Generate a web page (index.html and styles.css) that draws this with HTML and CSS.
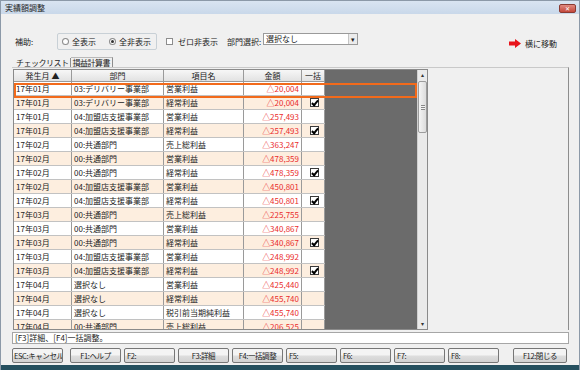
FILE: index.html
```html
<!DOCTYPE html>
<html lang="ja">
<head>
    <meta charset="UTF-8">
    <title>実績額調整</title>
    <link rel="stylesheet" href="styles.css">
</head>
<body>
    <div class="window">
        <div class="titlebar">
            <span class="title">実績額調整</span>
            <span class="close">✕</span>
        </div>

        <div class="client">
            <!-- 上部の条件 -->
            <div class="toolbar">
                <span class="lbl lbl-hojo">補助:</span>
                <div class="groupbox">
                    <span class="radio"></span><span class="radio-text">全表示</span>
                    <span class="radio checked"></span><span class="radio-text">全非表示</span>
                </div>
                <div class="check-wrap">
                    <span class="chk"></span><span>ゼロ非表示</span>
                </div>
                <span class="lbl lbl-bumon">部門選択:</span>
                <div class="select">
                    <span class="select-text">選択なし</span>
                    <span class="select-btn">▾</span>
                </div>
                <div class="spacer"></div>
                <div class="move">
                    <svg width="12" height="9" viewBox="0 0 12 9"><path d="M0 2.5h6V0l6 4.5L6 9V6.5H0z" fill="#e8141b"/></svg>
                    <span>横に移動</span>
                </div>
            </div>

            <!-- タブ -->
            <div class="tabs">
                <span class="tab active">チェックリスト</span>
                <span class="tab">損益計算書</span>
            </div>

            <div class="panel">
                <div class="grid">
                    <div class="grid-main">
                        <div class="row head">
                            <span>発生月 ▲</span>
                            <span>部門</span>
                            <span>項目名</span>
                            <span>金額</span>
                            <span>一括</span>
                        </div>
                        <div class="rows" id="rows"></div>
                        <div class="current"></div>
                    </div>
                    <div class="scrollbar">
                        <span class="sb-btn">▴</span>
                        <div class="sb-track">
                            <div class="sb-thumb"><span class="grip"></span></div>
                        </div>
                        <span class="sb-btn">▾</span>
                    </div>
                </div>
            </div>

            <div class="status">[F3]詳細、[F4]一括調整。</div>

            <div class="buttons">
                <button class="btn btn-esc">ESC:キャンセル</button>
                <div class="fkeys">
                    <button class="btn">F1:ヘルプ</button>
                    <button class="btn left">F2:</button>
                    <button class="btn">F3:詳細</button>
                    <button class="btn">F4:一括調整</button>
                    <button class="btn left">F5:</button>
                    <button class="btn left">F6:</button>
                    <button class="btn left">F7:</button>
                    <button class="btn left">F8:</button>
                </div>
                <button class="btn btn-close">F12:閉じる</button>
            </div>
        </div>
        <div class="frame-bottom"></div>
    </div>

    <script>
        // 実績データ
        const data = [
            ['17年01月', '03:デリバリー事業部', '営業利益', '△20,004', false],
            ['17年01月', '03:デリバリー事業部', '経常利益', '△20,004', true],
            ['17年01月', '04:加盟店支援事業部', '営業利益', '△257,493', false],
            ['17年01月', '04:加盟店支援事業部', '経常利益', '△257,493', true],
            ['17年02月', '00:共通部門', '売上総利益', '△363,247', false],
            ['17年02月', '00:共通部門', '営業利益', '△478,359', false],
            ['17年02月', '00:共通部門', '経常利益', '△478,359', true],
            ['17年02月', '04:加盟店支援事業部', '営業利益', '△450,801', false],
            ['17年02月', '04:加盟店支援事業部', '経常利益', '△450,801', true],
            ['17年03月', '00:共通部門', '売上総利益', '△225,755', false],
            ['17年03月', '00:共通部門', '営業利益', '△340,867', false],
            ['17年03月', '00:共通部門', '経常利益', '△340,867', true],
            ['17年03月', '04:加盟店支援事業部', '営業利益', '△248,992', false],
            ['17年03月', '04:加盟店支援事業部', '経常利益', '△248,992', true],
            ['17年04月', '選択なし', '営業利益', '△425,440', false],
            ['17年04月', '選択なし', '経常利益', '△455,740', false],
            ['17年04月', '選択なし', '税引前当期純利益', '△455,740', false],
            ['17年04月', '00:共通部門', '売上総利益', '△206,525', false]
        ];

        let html = '';
        data.forEach((r, i) => {
            html += `<div class="row ${i % 2 ? 'alt' : ''}">`;
            html += `<span>${r[0]}</span><span>${r[1]}</span><span>${r[2]}</span>`;
            html += `<span class="amt">${r[3]}</span>`;
            html += `<span class="ck">${r[4] ? '<i class="tick"></i>' : ''}</span>`;
            html += `</div>`;
        });
        document.getElementById('rows').innerHTML = html;
    </script>
</body>
</html>
```

FILE: styles.css
```css
* {
    box-sizing: border-box;
}

body {
    margin: 0;
    font-family: "Noto Sans CJK JP", "Noto Sans", sans-serif;
    font-size: 8px;
    color: #222;
}

.window {
    width: 580px;
    height: 370px;
    background-color: #f0f0f0;
    border-left: 1px solid #8c99a8;
    border-right: 1px solid #8c99a8;
    border-top: 1px solid #8c99a8;
    display: flex;
    flex-direction: column;
    overflow: hidden;
}

.titlebar {
    height: 13px;
    flex: none;
    display: flex;
    align-items: center;
    justify-content: space-between;
    padding: 0 3px 0 4px;
    background: linear-gradient(#d9e4f1, #c9d8ea);
}

.title {
    font-size: 8px;
    line-height: 10px;
    color: #1e1e1e;
}

.close {
    width: 17px;
    height: 9px;
    margin-top: 2px;
    border-radius: 2px;
    background: linear-gradient(#e08a80, #c4473b);
    border: 1px solid #8a3a32;
    color: #fff;
    font-size: 6px;
    line-height: 7px;
    text-align: center;
}

.client {
    flex: 1;
    margin: 1px 2px 0;
    padding: 0 8px 0 9px;
    display: flex;
    flex-direction: column;
    background-color: #f0f0f0;
}

.frame-bottom {
    height: 5px;
    flex: none;
    background-color: #25505f;
}

/* 上部の条件 */
.toolbar {
    margin-top: 18px;
    height: 17px;
    display: flex;
    align-items: center;
}

.lbl {
    line-height: 10px;
}

.lbl-hojo {
    width: 45px;
    padding-left: 3px;
}

.groupbox {
    width: 100px;
    height: 17px;
    border: 1px solid #c8d0d6;
    border-radius: 2px;
    display: flex;
    align-items: center;
    padding-left: 4px;
}

.radio {
    width: 7px;
    height: 7px;
    border-radius: 50%;
    border: 1px solid #8d8d8d;
    background-color: #fff;
    position: relative;
    margin-right: 3px;
}

.radio.checked::after {
    content: "";
    position: absolute;
    left: 1px;
    top: 1px;
    width: 3px;
    height: 3px;
    border-radius: 50%;
    background-color: #333;
}

.radio-text {
    width: 38px;
}

.check-wrap {
    width: 61px;
    margin-left: 9px;
    display: flex;
    align-items: center;
    white-space: nowrap;
}

.chk {
    width: 7px;
    height: 7px;
    border: 1px solid #8d8d8d;
    background-color: #fff;
    margin-right: 5px;
}

.lbl-bumon {
    width: 36px;
}

.select {
    width: 95px;
    height: 12px;
    margin-top: -6px;
    border: 1px solid #9a9a9a;
    background-color: #fff;
    display: flex;
    align-items: center;
    padding-left: 2px;
}

.select-text {
    flex: 1;
    line-height: 10px;
}

.select-btn {
    width: 9px;
    height: 10px;
    background-color: #ececec;
    border-left: 1px solid #c5c5c5;
    font-size: 7px;
    line-height: 10px;
    text-align: center;
}

.spacer {
    flex: 1;
}

.move {
    display: flex;
    align-items: center;
    gap: 4px;
    margin-right: 12px;
    margin-top: 3px;
}

/* タブ */
.tabs {
    margin-top: 7px;
    height: 10px;
    display: flex;
    align-items: flex-end;
    padding-left: 1px;
}

.tab {
    line-height: 9px;
    padding: 0 2px;
    white-space: nowrap;
    letter-spacing: -0.5px;
}

.tab.active {
    padding-left: 3px;
    padding-right: 1px;
    border-right: 1px solid #8d8d8d;
}

.tab:not(.active) {
    border-top: 1px solid #b9b9b9;
    border-right: 1px solid #8d8d8d;
    padding-right: 2px;
}

.panel {
    height: 263px;
    border-top: 1px solid #c9c9c9;
    border-right: 1px solid #8d8d8d;
    padding: 1px 0 0 1px;
}

/* グリッド */
.grid {
    width: 415px;
    height: 261px;
    border: 1px solid #8a8a8a;
    display: flex;
    overflow: hidden;
}

.grid-main {
    flex: 1;
    background-color: #6b6b6b;
    position: relative;
    overflow: hidden;
}

.row {
    width: 311px;
    height: 14px;
    display: grid;
    grid-template-columns: 58px 92px 80px 58px 23px;
    background-color: #fff;
    border-bottom: 1px solid #c2c2c2;
}

.row.alt {
    background-color: #fdeedf;
}

.row span {
    border-right: 1px solid #9a9a9a;
    padding: 0 2px;
    line-height: 13px;
    white-space: nowrap;
    overflow: hidden;
}

.row.head {
    height: 12px;
    background: linear-gradient(#f7f7f7, #e2e2e2);
    border-bottom: 1px solid #9a9a9a;
}

.row.head span {
    text-align: center;
    line-height: 11px;
}

.amt {
    text-align: right;
    color: #ea2c2c;
}

.ck {
    display: flex;
    align-items: center;
    justify-content: center;
}

.tick {
    width: 9px;
    height: 9px;
    border: 1px solid #3a3a3a;
    background-color: #fff;
    position: relative;
    margin-left: 2px;
}

.tick::after {
    content: "";
    position: absolute;
    left: 2px;
    top: 0;
    width: 2px;
    height: 5px;
    border-right: 2px solid #000;
    border-bottom: 2px solid #000;
    transform: rotate(40deg);
}

.current {
    position: absolute;
    left: 0;
    right: 0;
    top: 13px;
    height: 15px;
    border: 2px solid #f26a1b;
}

/* スクロールバー */
.scrollbar {
    width: 10px;
    background-color: #eaeaea;
    border-left: 1px solid #d0d0d0;
    display: flex;
    flex-direction: column;
}

.sb-btn {
    height: 10px;
    font-size: 6px;
    line-height: 10px;
    text-align: center;
    color: #333;
}

.sb-track {
    flex: 1;
}

.sb-thumb {
    margin-top: 1px;
    height: 52px;
    border: 1px solid #9c9c9c;
    border-radius: 2px;
    background: linear-gradient(90deg, #f4f4f4, #dcdcdc);
    display: flex;
    align-items: center;
    justify-content: center;
}

.grip {
    width: 4px;
    height: 5px;
    border-top: 1px solid #888;
    border-bottom: 1px solid #888;
    background: linear-gradient(#f4f4f4 40%, #888 40%, #888 60%, #f4f4f4 60%);
}

/* ステータス */
.status {
    margin-top: 2px;
    height: 12px;
    border: 1px solid #a6a6a6;
    background-color: #fff;
    line-height: 10px;
    padding-left: 2px;
}

/* ボタン */
.buttons {
    margin-top: 4px;
    height: 15px;
    display: flex;
}

.btn {
    width: 51px;
    height: 15px;
    padding: 0 1px;
    font-family: inherit;
    font-size: 7.5px;
    letter-spacing: -0.4px;
    line-height: 12px;
    color: #222;
    border: 1px solid #777;
    border-radius: 2px;
    background: linear-gradient(#f4f4f4 45%, #dddddd 55%, #d2d2d2);
    white-space: nowrap;
    overflow: hidden;
}

.btn.left {
    text-align: left;
    padding-left: 2px;
}

.fkeys {
    display: flex;
    gap: 3px;
    margin-left: 7px;
}

.btn-close {
    margin-left: auto;
    margin-right: 2px;
    width: 54px;
}
```
